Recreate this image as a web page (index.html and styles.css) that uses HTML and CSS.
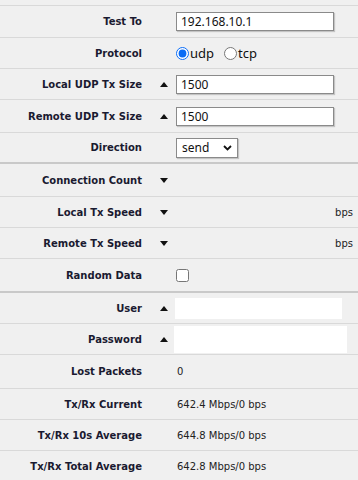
FILE: index.html
```html
<!DOCTYPE html>
<html lang="en">
<head>
    <meta charset="UTF-8">
    <meta name="viewport" content="width=device-width, initial-scale=1.0">
    <title>Bandwidth Test</title>
    <link rel="stylesheet" href="styles.css">
</head>
<body>
    <div class="form">
        <div class="row h32">
            <div class="label">Test To</div>
            <div class="arrow"></div>
            <div class="value"><input type="text" class="field" value="192.168.10.1"></div>
        </div>
        <div class="row">
            <div class="label">Protocol</div>
            <div class="arrow"></div>
            <div class="value radios">
                <label class="radio"><input type="radio" name="proto" checked>udp</label>
                <label class="radio"><input type="radio" name="proto">tcp</label>
            </div>
        </div>
        <div class="row">
            <div class="label">Local UDP Tx Size</div>
            <div class="arrow"><span class="tri up"></span></div>
            <div class="value"><input type="text" class="field" value="1500"></div>
        </div>
        <div class="row h33">
            <div class="label">Remote UDP Tx Size</div>
            <div class="arrow"><span class="tri up"></span></div>
            <div class="value"><input type="text" class="field" value="1500"></div>
        </div>
        <div class="row h30">
            <div class="label">Direction</div>
            <div class="arrow"></div>
            <div class="value">
                <div class="select">
                    <select>
                        <option>send</option>
                        <option>receive</option>
                        <option>both</option>
                    </select>
                    <svg class="chevron" width="9" height="6" viewBox="0 0 9 6"><path d="M1 1l3.5 3.5L8 1" fill="none" stroke="#111" stroke-width="1.8"/></svg>
                </div>
            </div>
        </div>
        <div class="row group h34">
            <div class="label">Connection Count</div>
            <div class="arrow"><span class="tri down"></span></div>
            <div class="value"></div>
        </div>
        <div class="row">
            <div class="label">Local Tx Speed</div>
            <div class="arrow"><span class="tri down"></span></div>
            <div class="value"></div>
            <div class="unit">bps</div>
        </div>
        <div class="row">
            <div class="label">Remote Tx Speed</div>
            <div class="arrow"><span class="tri down"></span></div>
            <div class="value"></div>
            <div class="unit">bps</div>
        </div>
        <div class="row h33">
            <div class="label">Random Data</div>
            <div class="arrow"></div>
            <div class="value"><input type="checkbox" class="check"></div>
        </div>
        <div class="row group h32">
            <div class="label">User</div>
            <div class="arrow"><span class="tri up"></span></div>
            <div class="value"><input type="text" class="plain user"></div>
        </div>
        <div class="row">
            <div class="label">Password</div>
            <div class="arrow"><span class="tri up"></span></div>
            <div class="value"><input type="password" class="plain pass"></div>
        </div>
        <div class="row h34">
            <div class="label">Lost Packets</div>
            <div class="arrow"></div>
            <div class="value text">0</div>
        </div>
        <div class="row">
            <div class="label">Tx/Rx Current</div>
            <div class="arrow"></div>
            <div class="value text">642.4 Mbps/0 bps</div>
        </div>
        <div class="row">
            <div class="label">Tx/Rx 10s Average</div>
            <div class="arrow"></div>
            <div class="value text">644.8 Mbps/0 bps</div>
        </div>
        <div class="row">
            <div class="label">Tx/Rx Total Average</div>
            <div class="arrow"></div>
            <div class="value text">642.8 Mbps/0 bps</div>
        </div>
    </div>
</body>
</html>
```

FILE: styles.css
```css
body {
    margin: 0;
    padding-top: 5px;
    background-color: #f0f0f0;
    font-family: "DejaVu Sans", Verdana, sans-serif;
    font-size: 10px;
    color: #1e1e2e;
}
.row {
    display: flex;
    align-items: center;
    height: 31px;
    box-sizing: border-box;
    border-top: 1px solid #d9d9d9;
}
.row.group { border-top: 2px solid #c9c9c9; }
.h30 { height: 30px; }
.h32 { height: 32px; }
.h33 { height: 33px; }
.h34 { height: 34px; }
.label {
    width: 150px;
    box-sizing: border-box;
    padding-right: 8px;
    text-align: right;
    font-weight: bold;
    color: #1a1a30;
}
.arrow {
    width: 26px;
    display: flex;
    justify-content: center;
    padding-left: 2px;
    box-sizing: border-box;
}
.tri {
    width: 0;
    height: 0;
    border-left: 4px solid transparent;
    border-right: 4px solid transparent;
}
.tri.up { border-bottom: 5px solid #111; }
.tri.down { border-top: 5px solid #111; }
.value {
    flex: 1;
    display: flex;
    align-items: center;
}
.value.text { padding-left: 1px; color: #222; }
.unit {
    padding-right: 5px;
    color: #222;
}
.field {
    width: 158px;
    height: 19px;
    box-sizing: border-box;
    margin: 0;
    padding: 0 4px;
    border: 1px solid #8a8a8a;
    box-shadow: 1px 1px 1px rgba(0,0,0,0.18);
    background: #fff;
    font-family: "Noto Sans", "Open Sans", sans-serif;
    font-size: 12px;
    color: #111;
    outline: none;
}
.radios { gap: 10px; }
.radio {
    display: flex;
    align-items: center;
    font-family: "Noto Sans", "Open Sans", sans-serif;
    font-size: 13px;
    color: #111;
}
.radio input {
    margin: 0 1px 0 0;
    width: 13px;
    height: 13px;
    accent-color: #0a6cf5;
}
.select {
    position: relative;
    width: 62px;
    height: 20px;
}
.select select {
    appearance: none;
    width: 100%;
    height: 100%;
    margin: 0;
    padding: 0 0 0 5px;
    border: 1px solid #8a8a8a;
    box-shadow: 1px 1px 1px rgba(0,0,0,0.18);
    border-radius: 0;
    background: #fff;
    font-family: "Noto Sans", "Open Sans", sans-serif;
    font-size: 12px;
    color: #111;
}
.chevron {
    position: absolute;
    right: 6px;
    top: 7px;
    pointer-events: none;
}
.check {
    margin: 0;
    width: 13px;
    height: 13px;
}
.plain {
    margin: 0;
    padding: 0 4px;
    border: none;
    background: #fff;
    outline: none;
    box-sizing: border-box;
}
.plain.user {
    width: 167px;
    height: 21px;
    margin-left: -1px;
}
.plain.pass {
    width: 173px;
    height: 27px;
    margin-left: -2px;
}
```
